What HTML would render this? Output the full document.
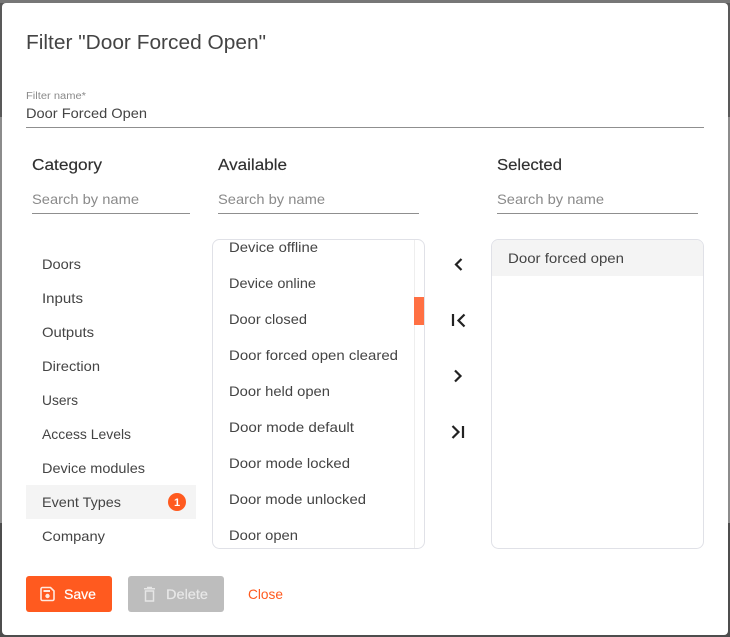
<!DOCTYPE html>
<html>
<head>
<meta charset="utf-8">
<style>
html,body{margin:0;padding:0;width:730px;height:637px;overflow:hidden;background:#8c8c8c}
svg{display:block;position:absolute;left:0;top:0}
text{font-family:"Liberation Sans",sans-serif;font-size:14px;fill:#444;dominant-baseline:alphabetic}
.ph{fill:#8a8a8a}
.h{font-size:16px;fill:#2f2f2f;stroke:#2f2f2f;stroke-width:.15px}
</style>
</head>
<body>
<svg width="730" height="637" viewBox="0 0 730 637" xmlns="http://www.w3.org/2000/svg">
<rect width="730" height="637" fill="#8c8c8c"/>
<rect x="0" y="0" width="730" height="117" fill="#595959"/>
<rect x="0" y="0" width="730" height="3" fill="#777"/>
<rect x="0" y="523" width="730" height="114" fill="#4d4d4d"/>
<rect x="2" y="3" width="726" height="632" rx="4" fill="#fff"/>

<text x="26" y="49" style="font-size:20px;fill:#444" textLength="240" lengthAdjust="spacingAndGlyphs">Filter "Door Forced Open"</text>
<text x="26" y="99" style="font-size:10px;fill:#8a8a8a" textLength="60" lengthAdjust="spacingAndGlyphs">Filter name*</text>
<text x="26" y="118" textLength="121" lengthAdjust="spacingAndGlyphs">Door Forced Open</text>
<rect x="26" y="127" width="678" height="1" fill="#8f8f8f"/>

<text class="h" x="32" y="170" textLength="70" lengthAdjust="spacingAndGlyphs">Category</text>
<text class="h" x="218" y="170" textLength="69" lengthAdjust="spacingAndGlyphs">Available</text>
<text class="h" x="497" y="170" textLength="65" lengthAdjust="spacingAndGlyphs">Selected</text>

<text class="ph" x="32" y="204" textLength="107" lengthAdjust="spacingAndGlyphs">Search by name</text>
<text class="ph" x="218" y="204" textLength="107" lengthAdjust="spacingAndGlyphs">Search by name</text>
<text class="ph" x="497" y="204" textLength="107" lengthAdjust="spacingAndGlyphs">Search by name</text>
<rect x="32" y="213" width="158" height="1" fill="#8f8f8f"/>
<rect x="218" y="213" width="201" height="1" fill="#8f8f8f"/>
<rect x="497" y="213" width="201" height="1" fill="#8f8f8f"/>

<rect x="26" y="485" width="170" height="34" fill="#f4f4f4"/>
<text x="42" y="269" textLength="39" lengthAdjust="spacingAndGlyphs">Doors</text>
<text x="42" y="303" textLength="41" lengthAdjust="spacingAndGlyphs">Inputs</text>
<text x="42" y="337" textLength="52" lengthAdjust="spacingAndGlyphs">Outputs</text>
<text x="42" y="371" textLength="58" lengthAdjust="spacingAndGlyphs">Direction</text>
<text x="42" y="405" textLength="36" lengthAdjust="spacingAndGlyphs">Users</text>
<text x="42" y="439" textLength="89" lengthAdjust="spacingAndGlyphs">Access Levels</text>
<text x="42" y="473" textLength="103" lengthAdjust="spacingAndGlyphs">Device modules</text>
<text x="42" y="507" textLength="79" lengthAdjust="spacingAndGlyphs">Event Types</text>
<text x="42" y="541" textLength="63" lengthAdjust="spacingAndGlyphs">Company</text>
<circle cx="177" cy="502" r="9" fill="#ff5a1f"/>
<text x="177" y="506" text-anchor="middle" style="font-size:11px;fill:#fff;font-weight:bold">1</text>

<rect x="212.500" y="239.500" width="212" height="309" rx="7" fill="#fff" stroke="#e0e1e7"/>
<rect x="414" y="240" width="1" height="308" fill="#eeeeee"/>
<rect x="414" y="297" width="10" height="28" fill="#ff7043"/>
<text x="229" y="252" textLength="89" lengthAdjust="spacingAndGlyphs">Device offline</text>
<text x="229" y="288" textLength="87" lengthAdjust="spacingAndGlyphs">Device online</text>
<text x="229" y="324" textLength="78" lengthAdjust="spacingAndGlyphs">Door closed</text>
<text x="229" y="360" textLength="169" lengthAdjust="spacingAndGlyphs">Door forced open cleared</text>
<text x="229" y="396" textLength="101" lengthAdjust="spacingAndGlyphs">Door held open</text>
<text x="229" y="432" textLength="125" lengthAdjust="spacingAndGlyphs">Door mode default</text>
<text x="229" y="468" textLength="121" lengthAdjust="spacingAndGlyphs">Door mode locked</text>
<text x="229" y="504" textLength="137" lengthAdjust="spacingAndGlyphs">Door mode unlocked</text>
<text x="229" y="540" textLength="69" lengthAdjust="spacingAndGlyphs">Door open</text>

<g fill="none" stroke="#222" stroke-width="2.200">
<path d="M461.500 259L456 264.500L461.500 270"/>
<path d="M453 314V326"/>
<path d="M464.500 314.500L458.500 320.500L464.500 326.500"/>
<path d="M455 370.500L460.500 376L455 381.500"/>
<path d="M452.500 426L458.500 432L452.500 438"/>
<path d="M463 426V438"/>
</g>

<rect x="491.500" y="239.500" width="212" height="309" rx="7" fill="#fff" stroke="#e0e1e7"/>
<path d="M492 276V247a7 7 0 0 1 7-7H696a7 7 0 0 1 7 7V276Z" fill="#f4f4f4"/>
<text x="508" y="263" textLength="116" lengthAdjust="spacingAndGlyphs">Door forced open</text>

<rect x="26" y="576" width="86" height="36" rx="3" fill="#ff5a1f"/>
<path d="M42.500 587.500H50.500L54 591V599A1.500 1.500 0 0 1 52.500 600.500H42.500A1.500 1.500 0 0 1 41 599V589A1.500 1.500 0 0 1 42.500 587.500Z" fill="none" stroke="#ffe9e0" stroke-width="1.600"/>
<rect x="43.500" y="590" width="6.500" height="2" fill="#ffe9e0"/>
<circle cx="47.500" cy="596" r="2.200" fill="#ffe9e0"/>
<text x="64" y="599" style="fill:#fff;stroke:#fff;stroke-width:.2px" textLength="32" lengthAdjust="spacingAndGlyphs">Save</text>

<rect x="128" y="576" width="96" height="36" rx="3" fill="#bdbdbd"/>
<path d="M145.500 591H153.500V601H145.500Z" fill="none" stroke="#e6e6e6" stroke-width="1.500"/>
<path d="M144 588.700H155M147 587.500H152" fill="none" stroke="#e6e6e6" stroke-width="1.500"/>
<text x="166" y="599" style="fill:#e8e8e8;stroke:#e8e8e8;stroke-width:.2px" textLength="42" lengthAdjust="spacingAndGlyphs">Delete</text>

<text x="248" y="599" style="fill:#ff5a1f" textLength="35" lengthAdjust="spacingAndGlyphs">Close</text>
</svg>
</body>
</html>
